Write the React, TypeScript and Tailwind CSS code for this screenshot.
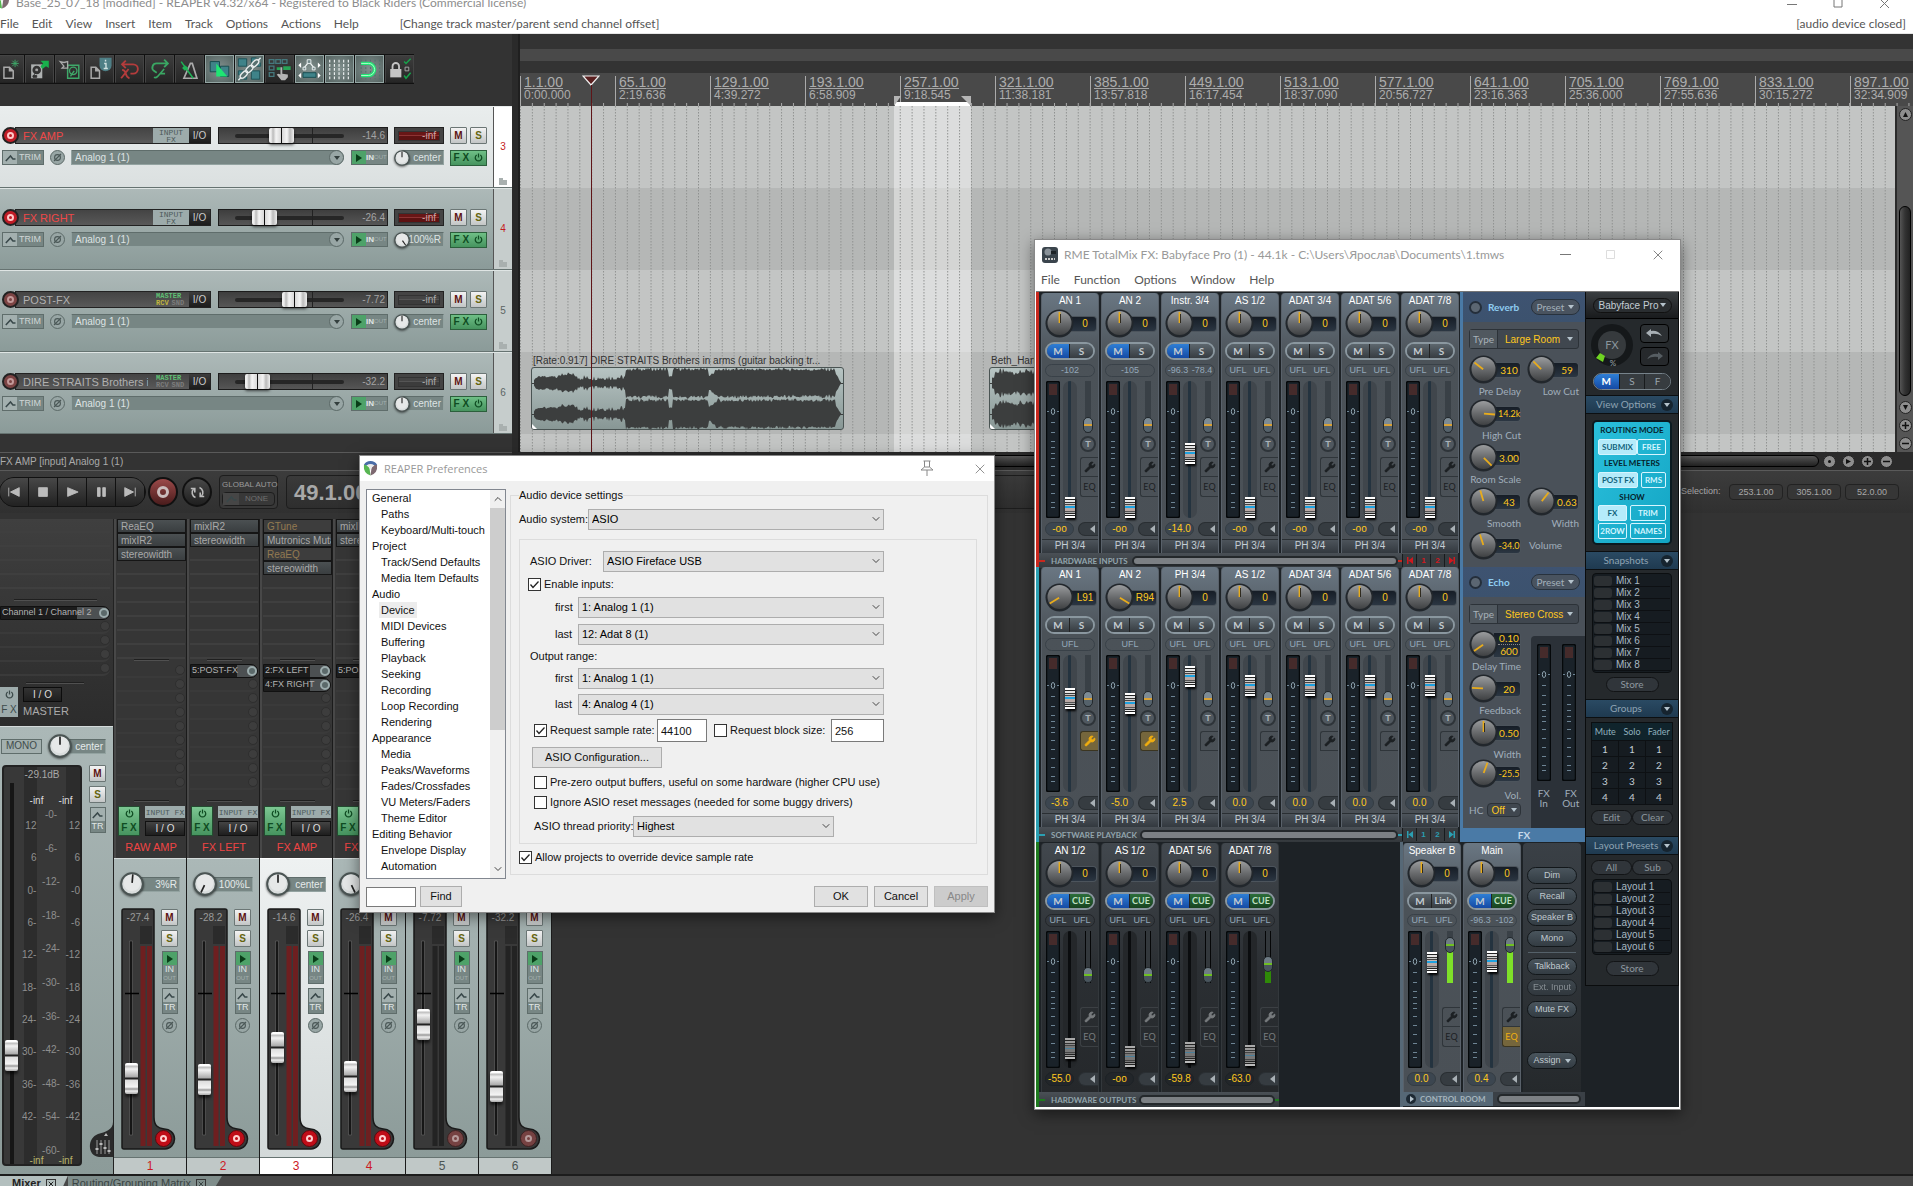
import { type ReactNode } from "react";
import { ChevronDown, ChevronUp, Wrench, X } from "lucide-react";
import clsx from "clsx";

/* ---------- shared bits ---------- */

const V_RANGE =
  "appearance-none bg-transparent m-0 p-0 [writing-mode:vertical-lr] [direction:rtl] cursor-pointer";

const CAP_V =
  "[&::-webkit-slider-thumb]:appearance-none [&::-webkit-slider-thumb]:w-[13px] [&::-webkit-slider-thumb]:h-[31px] [&::-webkit-slider-thumb]:rounded-[2px] [&::-webkit-slider-thumb]:shadow-[0_3px_3px_rgba(0,0,0,.6)] [&::-webkit-slider-thumb]:bg-[linear-gradient(#fff_0_2px,#bbb_3px,#f2f2f2_6px,#aaa_14px,#222_15px,#222_16px,#ddd_17px,#f4f4f4_24px,#999_26px,#eee_28px,#aaa)]";

const CAP_H =
  "[&::-webkit-slider-thumb]:appearance-none [&::-webkit-slider-thumb]:w-[25px] [&::-webkit-slider-thumb]:h-[15px] [&::-webkit-slider-thumb]:rounded-[2px] [&::-webkit-slider-thumb]:shadow-[0_2px_3px_rgba(0,0,0,.6)] [&::-webkit-slider-thumb]:bg-[linear-gradient(90deg,#eee_0_2px,#bbb_4px,#f4f4f4_7px,#d8d8d8_12px,#111_12px,#111_13px,#d8d8d8_13px,#f4f4f4_18px,#bbb_21px,#eee)]";

const CAP_MIX =
  "[&::-webkit-slider-thumb]:appearance-none [&::-webkit-slider-thumb]:w-[10px] [&::-webkit-slider-thumb]:h-[21px] [&::-webkit-slider-thumb]:shadow-[1px_2px_2px_#000] [&::-webkit-slider-thumb]:bg-[linear-gradient(#fff_0_2px,#222_2px_3px,#e4e4e4_3px_5px,#333_5px_6px,#ccc_6px_7px,#444_7px_8px,#c4b6b0_8px_9px,#1ea2e0_9px_11px,#b9a9a5_11px_14px,#555_14px_15px,#aaa_15px_16px,#222_16px_17px,#eee_17px_18px,#222_18px_19px,#fff_19px)]";

const CAP_MIX_DIM =
  "[&::-webkit-slider-thumb]:appearance-none [&::-webkit-slider-thumb]:w-[10px] [&::-webkit-slider-thumb]:h-[21px] [&::-webkit-slider-thumb]:shadow-[1px_2px_2px_#000] [&::-webkit-slider-thumb]:bg-[linear-gradient(#aaa_0_2px,#222_2px_3px,#999_3px_5px,#333_5px_6px,#888_6px_7px,#444_7px_8px,#777_8px_10px,#4a7f9a_10px_11px,#777_11px_14px,#444_14px_15px,#777_15px_16px,#222_16px_17px,#999_17px_18px,#222_18px_19px,#bbb_19px)]";

const TRIM_YELLOW =
  "[&::-webkit-slider-thumb]:appearance-none [&::-webkit-slider-thumb]:w-[10px] [&::-webkit-slider-thumb]:h-[16px] [&::-webkit-slider-thumb]:rounded-full [&::-webkit-slider-thumb]:border [&::-webkit-slider-thumb]:border-[#22282c] [&::-webkit-slider-thumb]:bg-[linear-gradient(#7d8b94_0_6px,#d8a238_6px_8px,#55626b_8px)]";

const TRIM_GREEN =
  "[&::-webkit-slider-thumb]:appearance-none [&::-webkit-slider-thumb]:w-[10px] [&::-webkit-slider-thumb]:h-[16px] [&::-webkit-slider-thumb]:rounded-full [&::-webkit-slider-thumb]:border [&::-webkit-slider-thumb]:border-[#22282c] [&::-webkit-slider-thumb]:bg-[linear-gradient(#6f7c85_0_6px,#6fc022_6px_8px,#49555d_8px)]";

function Power({ size = 9 }: { size?: number }) {
  return (
    <svg width={size} height={size} viewBox="0 0 10 10" fill="none" stroke="currentColor" strokeWidth="1.4">
      <path d="M3 2.2a3.6 3.6 0 1 0 4 0M5 .6v4.4" />
    </svg>
  );
}

function Env() {
  return (
    <svg width="11" height="8" viewBox="0 0 11 8" fill="none" stroke="#39484a" strokeWidth="1.5">
      <path d="M.8 7 5.5 2l2.4 3h2.6" />
    </svg>
  );
}

function Phase() {
  return (
    <button aria-label="Phase invert" className="flex size-[15px] shrink-0 items-center justify-center rounded-full border border-[#5b6967] bg-[#98a6a5]">
      <svg width="9" height="9" viewBox="0 0 9 9" fill="none" stroke="#4b5857" strokeWidth="1.1">
        <circle cx="4.5" cy="4.5" r="2.9" />
        <path d="M1 8 8 1" />
      </svg>
    </button>
  );
}

function WhiteKnob({ angle, size = 16 }: { angle: number; size?: number }) {
  return (
    <svg width={size} height={size} viewBox="0 0 20 20" className="relative z-10 shrink-0 drop-shadow-[0_1px_1px_rgba(0,0,0,.6)]">
      <circle cx="10" cy="10" r="9" fill="#d9dddd" stroke="#4a5453" strokeWidth="1.6" />
      <circle cx="10" cy="9" r="7" fill="#e6e8e8" />
      <path d="M10 9V2" stroke="#222" strokeWidth="1.4" transform={`rotate(${angle} 10 10)`} />
    </svg>
  );
}

function MuteSolo({ kind }: { kind: "M" | "S" }) {
  return (
    <button
      className={clsx(
        "size-[17px] shrink-0 rounded-[1px] border border-[#6b7675] bg-gradient-to-b from-[#f3f3f3] to-[#c3c6c6] text-[10px] leading-[14px] font-bold",
        kind === "M" ? "text-[#5d1212]" : "text-[#64640f]"
      )}
    >
      {kind}
    </button>
  );
}

function ReaperLogo({ size = 15 }: { size?: number }) {
  return (
    <svg width={size} height={size} viewBox="0 0 16 16">
      <path d="M8 0a8 8 0 0 1 7 4l-1 2Q8 1 2 6L1 4a8 8 0 0 1 7-4z" fill="#4a6da8" />
      <path d="M1 4q4 0 6 4l1 7.500Q0 13 1 4z" fill="#57b552" />
      <path d="M15 4q-5 0-6 4l-1 7.500Q16 13 15 4z" fill="#7d6870" />
      <path d="M4 5q4-3 8 0-3 1-4 5-1-4-4-5z" fill="#ececec" />
    </svg>
  );
}

/* ---------- toolbar ---------- */

const TOOLS: { name: string; on?: boolean; art: ReactNode }[] = [
  {
    name: "New project",
    art: (
      <>
        <path d="M8 12h6l4 4v8H8zM14 12v4h4" fill="none" stroke="#aaa" strokeWidth="1.6" />
        <path d="M20 4v8M16 8h8M17 5l6 6M23 5l-6 6" stroke="#3fa869" strokeWidth="1" />
      </>
    ),
  },
  {
    name: "Open project",
    art: (
      <>
        <path d="M5 9h12v15H5z" fill="#aeb1b1" />
        <circle cx="11" cy="15" r="4.6" fill="#333" />
        <circle cx="11" cy="15" r="1.6" fill="#aaa" />
        <path d="M7 22l4-6M7 21h4v2H7z" stroke="#333" fill="#333" />
        <path d="M15 5h9v8l-3-2-4 3-2-3 3-3z" fill="#18b04c" />
      </>
    ),
  },
  {
    name: "Save project",
    art: (
      <>
        <path d="M12 10h12v14H12z" fill="none" stroke="#3fa869" strokeWidth="1.6" />
        <circle cx="18" cy="16" r="4" fill="none" stroke="#3fa869" strokeWidth="1.4" />
        <path d="M15 22l4-6" stroke="#3fa869" strokeWidth="1.6" />
        <path d="M4 6l4 1 4-1v7H6l2-2z" fill="none" stroke="#aaa" strokeWidth="1.4" />
      </>
    ),
  },
  {
    name: "Project settings",
    art: (
      <>
        <path d="M5 12h5l4 4v8H5zM10 12v4h4" fill="none" stroke="#aaa" strokeWidth="1.6" />
        <path d="M14 2h13v8a6.5 6.5 0 0 1-13 0z" fill="#4e7f86" />
        <path d="M20.500 4v2M19 8h2v5M18.500 13.500h4.500" stroke="#cfe0e0" strokeWidth="1.500" fill="none" />
      </>
    ),
  },
  {
    name: "Undo",
    art: (
      <>
        <path d="M6 9h12a5 5 0 0 1 0 10h-3M10 5L6 9l4 4" fill="none" stroke="#b43c3c" strokeWidth="2" />
        <path d="M6 15q3 0 4 4t4 5M13 14l-8 10" fill="none" stroke="#b43c3c" strokeWidth="2" />
      </>
    ),
  },
  {
    name: "Redo",
    art: (
      <>
        <path d="M23 8H11a4.500 4.500 0 0 0-3 8l3 2M19 4l4 4-4 4" fill="none" stroke="#3aa763" strokeWidth="2" />
        <path d="M19 14l-7 8q-2 2-4 1M15 19h5" fill="none" stroke="#3aa763" strokeWidth="1.800" />
      </>
    ),
  },
  {
    name: "Metronome",
    art: (
      <>
        <path d="M15 8h2l5 16H8z" fill="none" stroke="#aaa" strokeWidth="1.800" />
        <path d="M5 6l13 18" stroke="#1fb457" strokeWidth="1.600" />
        <path d="M9 10l4 3-4 3-3-3z" fill="#1fb457" />
      </>
    ),
  },
  {
    name: "Auto crossfade",
    on: true,
    art: (
      <>
        <path d="M4 6h10v11H4zM15 11h9v11h-9z" fill="#3f8389" stroke="#15484c" />
        <path d="M10.500 8v14h12z" fill="#1fe673" />
      </>
    ),
  },
  {
    name: "Item grouping",
    on: true,
    art: (
      <>
        <path d="M2 3h9v8H2zM16 2h10v9H16zM2 16h9v9H2zM16 16h9v9h-9z" fill="#3f8389" stroke="#1c5055" />
        <path d="M2 26L26 2" stroke="#57706f" strokeWidth="7" />
        <g fill="none" stroke="#e8eded" strokeWidth="1.500">
          <ellipse cx="8" cy="20" rx="5" ry="2.500" transform="rotate(-45 8 20)" />
          <ellipse cx="14" cy="14" rx="5" ry="2.500" transform="rotate(-45 14 14)" />
          <ellipse cx="20" cy="8" rx="5" ry="2.500" transform="rotate(-45 20 8)" />
          <path d="M2 26l3-3M23 5l3-3" />
        </g>
      </>
    ),
  },
  {
    name: "Ripple editing",
    art: (
      <>
        <path d="M3 4h5v4H3zM10 4h5v4h-5zM17 4h5v4h-5zM3 11h5v4H3zM3 18h5v4H3z" fill="none" stroke="#45787d" strokeWidth="1.400" />
        <path d="M11 12h4v3h-4zM18 11h8v4h-8z" fill="#27a355" />
        <path d="M15 12h2v7l6 1v3l-3 3h-4l-5-6 2-1 2 1z" fill="#b5b5b5" />
      </>
    ),
  },
  {
    name: "Move envelopes",
    on: true,
    art: (
      <>
        <path d="M8 13l5.500-7 5.500 7" fill="none" stroke="#eef3f3" strokeWidth="1.300" />
        <path d="M11.500 4h4v4h-4zM7 12h3v3H7zM17 12h3v3h-3z" fill="#73888a" stroke="#eef3f3" />
        <path d="M7 18h14v5H7z" fill="#3f8389" stroke="#174c50" />
        <path d="M5 7v6L2 10zM23 7v6l3-3zM5 18v6l-3-3zM23 18v6l3-3z" fill="#fff" />
      </>
    ),
  },
  {
    name: "Grid lines",
    on: true,
    art: <path d="M3.500 4v21M8.500 4v21M13.500 4v21M18.500 4v21M23.500 4v21" stroke="#f0f4f4" strokeWidth="1.200" strokeDasharray="3 1.500" />,
  },
  {
    name: "Snap",
    on: true,
    art: (
      <>
        <path d="M5 4v21M10 4v21M15 4v21M20 4v21M25 4v21" stroke="#49716a" strokeDasharray="2 2" />
        <path d="M5 8h8a6 6 0 0 1 0 13H5" fill="none" stroke="#1fe673" strokeWidth="3.500" />
        <path d="M5 8h8a6 6 0 0 1 0 13H5" fill="none" stroke="#b5ffd0" strokeWidth="1" />
      </>
    ),
  },
  {
    name: "Locking",
    art: (
      <>
        <path d="M4 14h12v9H4z" fill="#c4c4c4" />
        <path d="M6.500 14v-3a3.500 3.500 0 0 1 7 0v3" fill="none" stroke="#c4c4c4" strokeWidth="2" />
        <path d="M20 12h4v4h-4z" fill="none" stroke="#aaa" />
        <path d="M19 6l2 2 5-5M19 21l2 3 5-6" fill="none" stroke="#16a34a" strokeWidth="1.600" />
      </>
    ),
  },
];

function Toolbar() {
  return (
    <div className="flex h-[72px] items-start bg-[#333] pt-5">
      <div className="-ml-[5px] flex gap-px bg-[#111] py-px">
        {TOOLS.map((t) => (
          <button
            key={t.name}
            aria-label={t.name}
            className={clsx(
              "h-[28px] w-[29px] shrink-0 border",
              t.on
                ? "border-[#93a5a3] bg-[radial-gradient(#82918f,#566462)]"
                : "border-[#444] border-b-[#222] bg-gradient-to-b from-[#3d3d3d] to-[#262626]"
            )}
          >
            <svg viewBox="0 0 28 28" className="size-full">
              {t.art}
            </svg>
          </button>
        ))}
      </div>
    </div>
  );
}

/* ---------- track panel ---------- */

const TRACKS = [
  { n: 3, name: "FX AMP", armed: true, sel: true, vol: "-14.6", v: 46, pan: "center", angle: 0, tag: "input" },
  { n: 4, name: "FX RIGHT", armed: true, vol: "-26.4", v: 29, pan: "100%R", angle: 145, tag: "input" },
  { n: 5, name: "POST-FX", vol: "-7.72", v: 60, pan: "center", angle: 0, tag: "rcv" },
  { n: 6, name: "DIRE STRAITS Brothers in arms", vol: "-32.2", v: 22, pan: "center", angle: 0, tag: "master" },
];

function TrackRow({ t }: { t: (typeof TRACKS)[number] }) {
  return (
    <div
      className={clsx(
        "flex h-[82px] border-t border-b border-b-[#667371]",
        t.sel
          ? "border-t-[#e9eded] bg-gradient-to-b from-[#e9eded] to-[#dbe0e0]"
          : "border-t-[#dfe5e4] bg-gradient-to-b from-[#adb9b8] to-[#8b9b99]"
      )}
    >
      <div className="flex w-[493px] flex-col gap-1.5 pt-[20px] pl-0.5">
        <div className="flex h-[17px] items-center">
          <button
            aria-label={`Record arm ${t.name}`}
            className={clsx(
              "z-10 -mr-1 flex size-[17px] shrink-0 items-center justify-center rounded-full border-2 border-[#222]",
              t.armed ? "bg-[#c01c26]" : "bg-[#7c4444]"
            )}
          >
            <span className={clsx("size-[7px] rounded-full border-2", t.armed ? "border-[#ffc8c8]" : "border-[#c39a9a]")} />
          </button>
          <div className="flex h-full w-[196px] border border-[#222] bg-gradient-to-b from-[#444] to-[#595959]">
            <span
              className={clsx(
                "w-[132px] overflow-hidden pl-[7px] text-[11px] leading-[16px] whitespace-nowrap",
                t.armed ? "text-[#ee4848]" : "text-[#b0b0b0]"
              )}
            >
              {t.name}
            </span>
            {t.tag === "input" ? (
              <button className="ml-auto w-[36px] shrink-0 bg-[#9dabab] font-['Liberation_Mono',monospace] text-[8px] leading-[7px] text-[#4c5a5a]">
                INPUT
                <br />
                FX
              </button>
            ) : (
              <span className="ml-auto w-[34px] shrink-0 pl-px font-['Liberation_Mono',monospace] text-[7px] leading-[8px] font-bold text-[#5fbf74]">
                MASTER
                <span className="flex gap-[3px] leading-[7px] text-[#7d7d7d]">
                  <span className={clsx(t.tag === "rcv" && "text-[#c0b63e]")}>RCV</span>
                  <span>SND</span>
                </span>
              </span>
            )}
            <button className="w-[21px] shrink-0 bg-gradient-to-b from-[#3c3c3c] to-[#1c1c1c] text-[10px] leading-[15px] text-[#ccc]">I/O</button>
          </div>
          <div className="relative ml-[7px] flex h-full w-[170px] items-center border border-[#1c1c1c] bg-gradient-to-b from-[#3e3e3e] to-[#565656] pl-[4px]">
            <span className="absolute left-[16px] h-1 w-[109px] rounded bg-[#262626]" />
            <span className="absolute left-[93px] h-full w-px bg-[#222]" />
            <input
              type="range"
              aria-label={`Volume ${t.name}`}
              min={0}
              max={108}
              defaultValue={t.v}
              className={clsx("relative h-4 w-[132px] appearance-none bg-transparent", CAP_H)}
            />
            <span className="ml-auto pr-0.5 text-[10px] text-[#a4a4a4]">{t.vol}</span>
          </div>
          <div className="ml-[6px] flex h-full w-[50px] items-center border border-[#222] bg-[#444] px-[3px]">
            <div
              className={clsx(
                "h-[10px] w-full border border-[#333] pr-[3px] text-right text-[10px] leading-[8px]",
                t.armed ? "bg-[linear-gradient(#681616_3px,#8d3333_3px_4px,#5d1212_4px)] text-[#d0a5a5]" : "bg-[linear-gradient(#444_3px,#555_3px_4px,#3c3c3c_4px)] text-[#aaa]"
              )}
            >
              -inf
            </div>
          </div>
          <div className="ml-[6px] flex gap-[3px]">
            <MuteSolo kind="M" />
            <MuteSolo kind="S" />
          </div>
        </div>
        <div className="flex h-[15px] items-center">
          <button className="flex h-full w-[42px] items-center border border-[#5f6d6b] bg-[#778684] text-[9px] text-[#d0d6d6]">
            <span className="flex h-full w-[14px] items-center justify-center bg-[#a3b0af]">
              <Env />
            </span>
            <span className="pl-[2px]">TRIM</span>
          </button>
          <span className="ml-[6px] flex">
            <Phase />
          </span>
          <div className="relative ml-[6px] h-full w-[273px]">
            <select
              aria-label={`Input ${t.name}`}
              className="block h-full w-full appearance-none rounded-r-full border border-[#93a3a1] border-t-[#5f6d6b] bg-[#778684] pl-[3px] text-[10px] leading-[12px] text-[#dde3e3]"
            >
              <option>Analog 1 (1)</option>
            </select>
            <span className="pointer-events-none absolute top-0 right-0 flex size-[15px] items-center justify-center rounded-full border border-[#5b6967] bg-[#98a6a5]">
              <svg width="6" height="4">
                <path d="M0 0h6L3 4z" fill="#333f3e" />
              </svg>
            </span>
          </div>
          <button className="ml-[7px] flex h-full w-[37px] items-center border border-[#5f6d6b] bg-[#778684] text-[#e0e6e6]">
            <span className="flex h-full w-[14px] shrink-0 items-center justify-center bg-[#4ea269]">
              <svg width="6" height="8">
                <path d="M0 0l6 4-6 4z" fill="#093d18" />
              </svg>
            </span>
            <span className="text-[8px] font-bold">IN</span>
            <span className="text-[6px] text-[#a3b0af]">OUT</span>
          </button>
          <div className="ml-[6px] flex h-full w-[50px] items-center">
            <WhiteKnob angle={t.angle} />
            <span className="-ml-2 h-full flex-1 border border-[#93a3a1] border-t-[#5f6d6b] bg-[#778684] pr-0.5 text-right text-[10px] leading-[13px] text-[#dde3e3]">
              {t.pan}
            </span>
          </div>
          <button className="ml-[6px] flex h-[16px] w-[37px] items-center justify-around border border-[#2c5f3c] bg-gradient-to-b from-[#6fbf86] to-[#46945f] text-[10px] font-bold text-[#0f4c22]">
            F X
            <Power />
          </button>
        </div>
      </div>
      <div
        className={clsx(
          "flex w-[19px] flex-col items-center border-l border-[#555] pt-[32px] text-[10px] leading-4",
          t.sel ? "bg-white" : "bg-[#c6cdcc]",
          t.armed ? "text-[#c41a20]" : "text-[#5c6463]"
        )}
      >
        {t.n}
        <svg width="8" height="7" className="mt-auto mb-[2px]">
          <path d="M0 0h4v2h4v5H0z" fill="#a9b0af" />
        </svg>
      </div>
    </div>
  );
}

/* ---------- arrange view ---------- */

const RULER = [
  ["1.1.00", "0:00.000"],
  ["65.1.00", "2:19.636"],
  ["129.1.00", "4:39.272"],
  ["193.1.00", "6:58.909"],
  ["257.1.00", "9:18.545"],
  ["321.1.00", "11:38.181"],
  ["385.1.00", "13:57.818"],
  ["449.1.00", "16:17.454"],
  ["513.1.00", "18:37.090"],
  ["577.1.00", "20:56.727"],
  ["641.1.00", "23:16.363"],
  ["705.1.00", "25:36.000"],
  ["769.1.00", "27:55.636"],
  ["833.1.00", "30:15.272"],
  ["897.1.00", "32:34.909"],
];

function noise(i: number) {
  const s = Math.sin(i * 12.9898) * 43758.5453;
  return s - Math.floor(s);
}

function wavePath(mid: number, width: number, level: (x: number) => number, seed: number) {
  const top: string[] = [];
  const bottom: string[] = [];
  for (let x = 2; x <= width - 4; x++) {
    const a = level(x);
    top.push(`${x} ${mid - a * (0.8 + 0.2 * noise(x + seed))}`);
    bottom.unshift(`${x} ${mid + a * (0.8 + 0.2 * noise(x + seed + 500))}`);
  }
  return `M${top.join("L")}L${bottom.join("L")}Z`;
}

function direLevel(x: number) {
  if (x < 5) return x * 1.5;
  if (x < 28) return 6 + 2 * noise(x >> 1);
  if (x < 44) return 7 + 4 * noise(x);
  if (x < 94) return 3 + 6 * noise(x);
  if (x > 136 && x < 141) return 7;
  if (x > 176 && x < 184) return 6 + (x - 176);
  if (x > 303) return Math.max(0.5, 12 - (x - 303) * 2);
  return x < 180 ? 14.5 + 1.5 * noise(x) : 14 + 2 * noise(x);
}

function MediaItem({ width, level }: { width: number; level: (x: number) => number }) {
  return (
    <svg width={width} height="63" className="rounded-[3px] border border-[#4a5453] bg-gradient-to-b from-[#b7c4c3] to-[#889795]">
      <path d={wavePath(15, width, level, 3)} fill="#3c3e3e" />
      <path d={wavePath(46, width, level, 77)} fill="#3c3e3e" />
      <path d={`M0 15.500H${width}M0 46.500H${width}`} stroke="#3c3e3e" />
      <path d="M0 56v6h6z" fill="#fff" />
    </svg>
  );
}

function Arrange() {
  return (
    <div className="relative flex min-w-0 flex-1 flex-col overflow-hidden bg-[#333] pt-[15px]">
      <div className="h-3 shrink-0 bg-[#494949]" />
      <div className="h-3 shrink-0" />
      <div className="relative h-[33px] shrink-0 overflow-hidden bg-[#494949]">
        <svg className="absolute inset-x-0 bottom-0 h-[3px] w-full">
          <defs>
            <pattern id="ticks" width="11.867" height="3" patternUnits="userSpaceOnUse">
              <path d="M.5 0v3" stroke="#aaa" />
            </pattern>
          </defs>
          <rect width="100%" height="3" fill="url(#ticks)" />
        </svg>
        <div className="relative flex">
          {RULER.map(([bar, time]) => (
            <div key={bar} className="mt-[3px] flex h-[30px] w-[95px] shrink-0 flex-col items-start border-l border-[#aaa] pl-[3px] text-[#adadad]">
              <span className="border-b border-[#a6a6a6] text-[14px] leading-[12px]">{bar}</span>
              <span className="text-[12px] leading-[13px]">{time}</span>
            </div>
          ))}
        </div>
        {/* loop selection handles */}
        <svg width="77" height="10" className="absolute bottom-0 left-[374px]">
          <path d="M1 6h75v4H1z" fill="#fff" />
          <path d="M0 0h7L0 10zM77 0H67l10 10z" fill="#b5b5b5" />
        </svg>
      </div>
      <div className="flex h-[346px] shrink-0">
        <div className="relative min-w-0 flex-1 overflow-hidden bg-[repeating-linear-gradient(#c3c5c4_0_82px,#b5b7b6_82px_164px)]">
          <svg className="absolute inset-0 size-full">
            <defs>
              <pattern id="grid" width="11.867" height="3" patternUnits="userSpaceOnUse">
                <path d="M.5 0v1.500" stroke="#8f9190" />
              </pattern>
            </defs>
            <rect x="374" width="77" height="100%" fill="#fff" opacity=".42" />
            <rect width="100%" height="100%" fill="url(#grid)" />
          </svg>
          <div className="absolute top-[248px] left-[11px]">
            <div className="w-[310px] pl-0.5 text-[10px] leading-[13px] whitespace-nowrap text-[#333]">
              [Rate:0.917] DIRE STRAITS Brothers in arms (guitar backing tr...
            </div>
            <MediaItem width={313} level={direLevel} />
          </div>
          <div className="absolute top-[248px] left-[469px]">
            <div className="pl-0.5 text-[10px] leading-[13px] text-[#333]">Beth_Hart</div>
            <MediaItem width={240} level={(x) => (x < 5 ? 6 : 9 + 6 * noise(x))} />
          </div>
        </div>
        <VScroll />
      </div>
      {/* edit cursor */}
      <svg width="18" height="378" className="absolute top-[41px] left-[62px]">
        <path d="M1 1h16L9 10z" fill="#5a2020" stroke="#f0f0f0" strokeWidth="1.200" />
        <path d="M9.500 10v368" stroke="#5e1518" />
      </svg>
    </div>
  );
}

function RoundButton({ label, children }: { label: string; children: ReactNode }) {
  return (
    <button aria-label={label} className="flex size-[13px] items-center justify-center rounded-full border border-[#222] bg-[#8e8e8e]">
      <svg width="7" height="7" viewBox="0 0 7 7" stroke="#111" strokeWidth="1.500">
        {children}
      </svg>
    </button>
  );
}

function VScroll() {
  return (
    <div className="flex w-[18px] shrink-0 flex-col items-center border-l-2 border-[#2b2b2b] bg-[#555] pt-[2px]">
      <RoundButton label="Scroll up">
        <path d="M3.500 1 6 6H1z" fill="#111" stroke="none" />
      </RoundButton>
      <div className="mt-[85px] h-[190px] w-[12px] rounded-md border border-black bg-gradient-to-r from-[#555] via-[#333] to-[#222]" />
      <div className="mt-auto flex flex-col items-center gap-[5px] pb-0.5">
        <RoundButton label="Scroll down">
          <path d="M3.500 6 6 1H1z" fill="#111" stroke="none" />
        </RoundButton>
        <RoundButton label="Zoom in vertically">
          <path d="M0 3.500h7M3.500 0v7" />
        </RoundButton>
        <RoundButton label="Zoom out vertically">
          <path d="M0 3.500h7" />
        </RoundButton>
      </div>
    </div>
  );
}

function HScroll() {
  return (
    <div className="flex flex-1 items-center bg-[#2b2b2b] pr-[20px]">
      <div className="mx-1 h-[12px] flex-1 rounded-full border border-black bg-gradient-to-b from-[#555] to-[#222]" />
      <div className="flex gap-[6px]">
        <RoundButton label="Grip">
          <circle cx="3.500" cy="3.500" r="1.500" fill="#111" stroke="none" />
        </RoundButton>
        <RoundButton label="Scroll right">
          <path d="M1 1l5 2.500L1 6z" fill="#111" stroke="none" />
        </RoundButton>
        <RoundButton label="Zoom in">
          <path d="M0 3.500h7M3.500 0v7" />
        </RoundButton>
        <RoundButton label="Zoom out">
          <path d="M0 3.500h7" />
        </RoundButton>
      </div>
    </div>
  );
}

/* ---------- transport ---------- */

const TRANSPORT = [
  { name: "Go to start", d: "M2 3v10M14 3 4 8l10 5z" },
  { name: "Stop", d: "M3 3h10v10H3z" },
  { name: "Play", d: "M3 3l12 5-12 5z" },
  { name: "Pause", d: "M4 3h3v10H4zM10 3h3v10h-3z" },
  { name: "Go to end", d: "M14 3v10M2 3l10 5-10 5z" },
];

function Transport() {
  return (
    <div className="flex h-[43px] shrink-0 items-center border-t border-[#5a5a5a] bg-gradient-to-b from-[#3c3c3c] to-[#303030]">
      <div className="-ml-px flex overflow-hidden rounded-full border border-[#111] bg-[#111]">
        {TRANSPORT.map((b) => (
          <button key={b.name} aria-label={b.name} className="mr-px flex h-[28px] w-[28px] items-center justify-center bg-gradient-to-b from-[#484848] to-[#222]">
            <svg width="14" height="14" viewBox="0 0 16 16" fill="#bbb" stroke="#bbb" strokeWidth="1">
              <path d={b.d} />
            </svg>
          </button>
        ))}
      </div>
      <button aria-label="Record" className="ml-[2px] flex size-[30px] items-center justify-center rounded-full border-2 border-[#111] bg-gradient-to-b from-[#9c4a4a] to-[#4a1c1c]">
        <span className="size-[12px] rounded-full border-[3px] border-[#cbbcbc]" />
      </button>
      <button aria-label="Repeat" className="ml-1 flex size-[30px] items-center justify-center rounded-full border-2 border-[#111] bg-gradient-to-b from-[#484848] to-[#1f1f1f]">
        <svg width="15" height="15" viewBox="0 0 15 15" fill="none" stroke="#bbb" strokeWidth="1.600">
          <path d="M5.500 12.500a5.300 5.300 0 0 1-2-8.500M9.500 2.500a5.300 5.300 0 0 1 2 8.500" />
          <path d="M.8 3.500h4v4M14.200 11.500h-4v-4" />
        </svg>
      </button>
      <div className="ml-[7px] flex h-[34px] w-[59px] shrink-0 flex-col justify-between rounded border border-[#1d1d1d] bg-[#383838] p-0.5 text-[#9a9a9a]">
        <span className="pt-0.5 text-center text-[8px] leading-[10px] whitespace-nowrap">GLOBAL AUTO</span>
        <button className="flex h-[14px] items-center rounded-sm border border-[#1d1d1d] text-[#707070]">
          <span className="flex h-full w-4 items-center justify-center bg-[#464646]">
            <Env />
          </span>
          <span className="flex-1 text-[8px]">NONE</span>
        </button>
      </div>
      <div className="ml-[8px] flex h-[34px] flex-1 items-center rounded border border-[#1d1d1d] bg-gradient-to-b from-[#3a3a3a] to-[#2e2e2e] pl-[7px] text-[22px] font-bold text-[#a8a8a8]">
        49.1.00
      </div>
      <div className="ml-3 flex w-[232px] items-center gap-1 text-[9px] text-[#a8a8a8]">
        <span className="w-[44px]">Selection:</span>
        {["253.1.00", "305.1.00", "52.0.00"].map((v) => (
          <span key={v} className="h-[16px] w-[54px] rounded-sm border border-[#222] bg-[#363636] text-center leading-[14px]">
            {v}
          </span>
        ))}
      </div>
    </div>
  );
}

/* ---------- mixer ---------- */

function FxSlot({ name, off }: { name?: string; off?: boolean }) {
  return name ? (
    <button
      className={clsx(
        "block h-[14px] w-[69px] overflow-hidden border border-[#151515] pl-[3px] text-left text-[10px] leading-[11px] whitespace-nowrap",
        off ? "bg-[#3d3d3d] text-[#937a51]" : "bg-gradient-to-b from-[#4b5052] to-[#3a3e40] text-[#a9a9a9]"
      )}
    >
      {name}
    </button>
  ) : (
    <div className="h-[14px] w-full border-b-2 border-[#3f3f3f]" />
  );
}

function SendSlot({ name }: { name?: string }) {
  return (
    <div
      className={clsx(
        "flex h-[14px] items-center justify-between rounded-r-full pl-px text-[9px] whitespace-nowrap",
        name ? "border border-[#111] bg-[linear-gradient(90deg,#1c1c1c_70%,#4c5052_70%)] text-[#b3b3b3]" : "border-b-2 border-[#3a3a3a]"
      )}
    >
      <span>{name}</span>
      <span
        className={clsx(
          "size-[10px] shrink-0 rounded-full",
          name ? "border-2 border-[#9babac] bg-[#5b696a]" : "border border-[#2f2f2f] bg-[#3d3d3d]"
        )}
      />
    </div>
  );
}

const Rule = ({ className }: { className: string }) => (
  <div className={clsx("mx-auto h-[2px] border-t border-[#1f1f1f] bg-[#505050]", className)} />
);

const STRIPS = [
  { n: 1, name: "RAW AMP", fx: ["ReaEQ", "mixIR2", "stereowidth"], sends: [], pan: "3%R", angle: 5, vol: "-27.4", v: 56, armed: true },
  { n: 2, name: "FX LEFT", fx: ["mixIR2", "stereowidth"], sends: ["5:POST-FX"], pan: "100%L", angle: 205, vol: "-28.2", v: 55, armed: true },
  { n: 3, name: "FX AMP", fx: ["*GTune", "Mutronics Mutator", "*ReaEQ", "stereowidth"], sends: ["2:FX LEFT", "4:FX RIGHT"], pan: "center", angle: 0, vol: "-14.6", v: 87, armed: true, sel: true },
  { n: 4, name: "FX RIGHT", fx: ["mixIR2", "stereowidth"], sends: ["5:POST-FX"], pan: "100%R", angle: 155, vol: "-26.4", v: 58, armed: true },
  { n: 5, name: "POST-FX", fx: [], sends: [], pan: "center", angle: 0, vol: "-7.72", v: 110 },
  { n: 6, name: "DIRE STRAITS", fx: [], sends: [], pan: "center", angle: 0, vol: "-32.2", v: 48 },
];

function Strip({ s }: { s: (typeof STRIPS)[number] }) {
  const slots = Array.from({ length: 10 }, (_, i) => s.fx[i]);
  const sends: (string | undefined)[] = Array.from({ length: 9 }, (_, i) => s.sends[i]);
  return (
    <div className="flex w-[73px] shrink-0 flex-col border-r border-[#1b1b1b]">
      <div className="h-[339px] border-l-2 border-[#484848] bg-[#363636] px-px">
        {slots.map((f, i) => (
          <FxSlot key={i} name={f?.replace("*", "")} off={f?.startsWith("*")} />
        ))}
        <Rule className="w-[35px]" />
        <div className="mt-[3px]">
          {sends.map((f, i) => (
            <SendSlot key={i} name={f} />
          ))}
        </div>
        <Rule className="mt-[10px] w-[35px]" />
        <div className="mt-[4px] flex gap-[5px] pl-px">
          <button className="flex h-[30px] w-[22px] flex-col items-center justify-around border border-[#234c30] bg-gradient-to-b from-[#7cc792] to-[#46945f] text-[10px] leading-[11px] font-bold text-[#0f4c22]">
            <Power />
            F X
          </button>
          <div className="flex w-[40px] flex-col justify-between">
            <button className="h-[12px] bg-[#9dabab] font-['Liberation_Mono',monospace] text-[8px] leading-[11px] whitespace-nowrap text-[#4c5a5a]">INPUT FX</button>
            <button className="h-[15px] border border-[#111] bg-gradient-to-b from-[#444] to-[#1e1e1e] text-[10px] leading-[12px] text-[#ddd]">I / O</button>
          </div>
        </div>
        <div className="mt-[2px] truncate text-center text-[11px] leading-[18px] text-[#ef4444]">{s.name}</div>
      </div>
      <div
        className={clsx(
          "relative h-[299px] border-t",
          s.sel ? "border-white bg-gradient-to-b from-[#eef1f1] to-[#d3d9d9]" : "border-[#d3dada] bg-gradient-to-b from-[#abb8b7] to-[#8c9b99]"
        )}
      >
        {/* fader well with the bay for the arm button */}
        <svg width="72" height="298" className="absolute inset-0">
          <path
            d="M8 52q0-2 2-2h28q2 0 2 2v206c0 9 4 11 10 12a10 10 0 0 1 1 20H10q-2 0-2-2z"
            fill="#393939"
            stroke="#191919"
            strokeWidth="1.500"
          />
          <path d="M15.500 82h3v194h-3z" fill="#161616" stroke="#666" strokeWidth=".6" />
          <path d="M11 134.500h14" stroke="#000" strokeWidth="1.500" />
          <path d="M26 67h12v18H26z" fill="#2b2b2b" />
          <path d="M26.500 87h5v200h-5zM33 87h5v200h-5z" fill={s.armed ? "#6e1f20" : "#232323"} />
        </svg>
        <div className="relative flex h-[50px] items-center pl-[6px]">
          <WhiteKnob angle={s.angle} size={24} />
          <span className="-ml-2 h-[15px] w-[44px] border border-[#93a3a1] border-t-[#5f6d6b] bg-[#778684] pr-0.5 text-right text-[10px] leading-[13px] text-[#e5eaea]">
            {s.pan}
          </span>
        </div>
        <div className="relative flex">
          <div className="w-[40px] pl-[8px]">
            <div className="h-[16px] text-center text-[10px] leading-[18px] text-[#9a9a9a]">{s.vol}</div>
            <input
              type="range"
              aria-label={`Volume ${s.name}`}
              min={0}
              max={194}
              defaultValue={s.v}
              className={clsx("block h-[225px] w-[18px]", V_RANGE, CAP_V)}
            />
          </div>
          <div className="ml-[7px] flex w-[17px] flex-col items-center">
            <MuteSolo kind="M" />
            <div className="h-1" />
            <MuteSolo kind="S" />
            <button className="mt-1 flex h-[33px] w-[16px] flex-col items-center border border-[#5f6d6b] bg-[#778684] text-[9px] leading-[9px] text-[#e0e6e6]">
              <span className="flex h-[13px] w-full items-center justify-center bg-[#4ea269]">
                <svg width="6" height="8">
                  <path d="M0 0l6 4-6 4z" fill="#093d18" />
                </svg>
              </span>
              IN
              <span className="text-[6px] text-[#a3b0af]">OUT</span>
            </button>
            <button className="mt-1 mb-1 flex h-[26px] w-[16px] flex-col items-center border border-[#5f6d6b] bg-[#778684] text-[9px] leading-[11px] text-[#e0e6e6]">
              <span className="flex h-[13px] w-full items-center justify-center bg-[#a3b0af]">
                <Env />
              </span>
              TR
            </button>
            <Phase />
          </div>
        </div>
        <button
          aria-label={`Record arm ${s.name}`}
          className={clsx(
            "absolute right-[14px] bottom-[10px] flex size-[17px] items-center justify-center rounded-full border",
            s.armed ? "border-[#5a0a0e] bg-[#c00d18]" : "border-[#3c2222] bg-[#764242]"
          )}
        >
          <span className={clsx("size-[7px] rounded-full border-2", s.armed ? "border-[#ffd0d0]" : "border-[#b59a9a]")} />
        </button>
      </div>
      <div
        className={clsx(
          "h-[17px] border-t border-[#667371] text-center text-[12px] leading-[16px]",
          s.sel ? "bg-white" : "bg-[#c0c8c7]",
          s.armed ? "text-[#cc1a24]" : "text-[#4b5453]"
        )}
      >
        {s.n}
      </div>
    </div>
  );
}

const SIDE_SCALE = ["12", "6", "0-", "6-", "12-", "18-", "24-", "30-", "36-", "42-"];
const MID_SCALE = ["-0-", "-6-", "-12-", "-18-", "-24-", "-30-", "-36-", "-42-", "-48-", "-54-", "-60-"];

function Master() {
  return (
    <div className="flex w-[114px] shrink-0 flex-col border-r border-[#222]">
      <div className="h-[207px] bg-gradient-to-b from-[#3f3f3f] to-[#2c2c2c] pr-[3px]">
        {[0, 1, 2, 3, 4].map((i) => (
          <FxSlot key={i} />
        ))}
        <Rule className="mt-[10px] w-[83px]" />
        <div className="mt-[5px]">
          <SendSlot name="Channel 1 / Channel 2" />
          {[0, 1, 2, 3].map((i) => (
            <SendSlot key={i} />
          ))}
        </div>
        <Rule className="mt-[6px] w-[58px]" />
        <div className="mt-[3px] flex gap-[5px]">
          <button className="flex h-[30px] w-[18px] flex-col items-center justify-around bg-[#9dabab] text-[10px] leading-[11px] text-[#3c4a4a]">
            <Power />
            <span className="whitespace-nowrap">F X</span>
          </button>
          <div>
            <button className="block h-[15px] w-[39px] border border-[#0c0c0c] bg-gradient-to-b from-[#333] to-[#1e1e1e] text-[10px] leading-[12px] text-[#ddd]">I / O</button>
            <span className="block text-[11px] leading-[18px] text-[#aaa]">MASTER</span>
          </div>
        </div>
      </div>
      <div className="relative flex flex-1 flex-col border-t border-[#d3dada] bg-gradient-to-b from-[#abb8b7] to-[#8c9b99]">
        <div className="flex h-[38px] items-center pl-px">
          <button className="h-[15px] w-[41px] border border-[#5f6d6b] bg-[#a3b0af] text-[10px] leading-[12px] text-[#3f4c4b]">MONO</button>
          <span className="ml-[6px] flex">
            <WhiteKnob angle={0} size={24} />
          </span>
          <span className="-ml-2 h-[15px] w-[42px] border border-[#93a3a1] border-t-[#5f6d6b] bg-[#778684] pr-0.5 text-right text-[10px] leading-[13px] text-[#e5eaea]">
            center
          </span>
        </div>
        <div className="flex">
          <div className="ml-[2px] h-[401px] w-[80px] rounded-sm border-2 border-[#222] bg-[linear-gradient(90deg,#383838_20px,#2c2c2c_20px_33px,#383838_33px_62px,#2c2c2c_62px)]">
            <div className="text-center text-[10px] leading-[16px] text-[#a8a8a8]">-29.1dB</div>
            <div className="flex text-[10px] leading-[12px] text-[#8f8f8f]">
              <input
                type="range"
                aria-label="Master volume"
                min={0}
                max={359}
                defaultValue={95}
                className={clsx(
                  "-ml-[2px] h-[381px] w-[18px] shrink-0",
                  "[&::-webkit-slider-runnable-track]:bg-[linear-gradient(90deg,transparent_5px,#161616_5px_9px,transparent_9px)]",
                  V_RANGE,
                  CAP_V
                )}
              />
              <div className="ml-[2px] flex flex-1 flex-col">
                <div className="mt-[12px] flex justify-around text-[#ddd]">
                  <span>-inf</span>
                  <span>-inf</span>
                </div>
                <div className="flex h-[350px] justify-between">
                  <div className="flex h-[316px] flex-col justify-between pt-[13px] text-right">
                    {SIDE_SCALE.map((v) => (
                      <span key={v}>{v}</span>
                    ))}
                  </div>
                  <div className="flex flex-col justify-between pt-[2px] text-center">
                    {MID_SCALE.map((v) => (
                      <span key={v}>{v}</span>
                    ))}
                  </div>
                  <div className="flex h-[316px] flex-col justify-between pt-[13px] text-right">
                    {SIDE_SCALE.map((v) => (
                      <span key={v}>{v.endsWith("-") ? `-${v.slice(0, -1)}` : v}</span>
                    ))}
                  </div>
                </div>
                <div className="-mt-px flex justify-around leading-[10px] text-[#b6b26a]">
                  <span>-inf</span>
                  <span>-inf</span>
                </div>
              </div>
            </div>
          </div>
          <div className="ml-[7px] flex w-[17px] flex-col items-center gap-1">
            <MuteSolo kind="M" />
            <MuteSolo kind="S" />
            <button className="flex h-[26px] w-[16px] flex-col items-center border border-[#5f6d6b] bg-[#778684] text-[9px] leading-[11px] text-[#e0e6e6]">
              <span className="flex h-[13px] w-full items-center justify-center bg-[#a3b0af]">
                <Env />
              </span>
              TR
            </button>
          </div>
        </div>
        <svg width="24" height="38" className="absolute right-0 bottom-[16px]">
          <path d="M24 2c0 8-8 10-15 12C-2 18-2 36 10 37h14z" fill="#2a2a2a" />
          <path d="M8 20v14M12 20v14M16 20v14M20 20v14" stroke="#999" strokeWidth="1" />
          <path d="M6.500 28h3v2h-3zM10.500 23h3v2h-3zM14.500 27h3v2h-3zM18.500 30h3v2h-3zM15 16l2-3 2 3z" fill="#bbb" />
        </svg>
      </div>
    </div>
  );
}

/* ---------- REAPER preferences ---------- */

const PREFS: [string, string[]][] = [
  ["General", ["Paths", "Keyboard/Multi-touch"]],
  ["Project", ["Track/Send Defaults", "Media Item Defaults"]],
  ["Audio", ["Device", "MIDI Devices", "Buffering", "Playback", "Seeking", "Recording", "Loop Recording", "Rendering"]],
  ["Appearance", ["Media", "Peaks/Waveforms", "Fades/Crossfades", "VU Meters/Faders", "Theme Editor"]],
  ["Editing Behavior", ["Envelope Display", "Automation"]],
];

function Select({ id, value, className }: { id: string; value: string; className: string }) {
  return (
    <span className={clsx("relative block h-[21px] shrink-0", className)}>
      <select id={id} className="block h-full w-full appearance-none border border-[#adadad] bg-[#e1e1e1] pl-[3px] text-[11px] text-black">
        <option>{value}</option>
      </select>
      <ChevronDown className="pointer-events-none absolute top-[4px] right-[2px] size-3 text-[#444]" strokeWidth={2} />
    </span>
  );
}

function Field({ id, label, value, labelWidth, width }: { id: string; label: string; value: string; labelWidth: string; width: string }) {
  return (
    <div className="flex h-[21px] items-center">
      <label htmlFor={id} className={clsx("shrink-0 whitespace-nowrap", labelWidth)}>
        {label}
      </label>
      <Select id={id} value={value} className={width} />
    </div>
  );
}

function Check({ label, checked }: { label: string; checked?: boolean }) {
  return (
    <label className="flex h-[13px] items-center gap-[3px] whitespace-nowrap">
      <span className="relative flex size-[13px]">
        <input type="checkbox" defaultChecked={checked} className="peer size-[13px] appearance-none border border-[#333] bg-white" />
        <svg viewBox="0 0 13 13" className="pointer-events-none absolute inset-0 hidden peer-checked:block" fill="none" stroke="#222" strokeWidth="1.300">
          <path d="M2.500 6.500 5 9.500l5.500-6" />
        </svg>
      </span>
      {label}
    </label>
  );
}

const PUSH = "h-[21px] border border-[#adadad] bg-[#e1e1e1] text-center";

function Preferences() {
  return (
    <section
      aria-label="REAPER Preferences"
      className="absolute top-[455px] left-[359px] z-20 w-[636px] border border-[#888] bg-[#f0f0f0] pb-[5px] text-[11px] leading-[13px] text-[#111] shadow-[0_4px_14px_rgba(0,0,0,.5)]"
    >
      <header className="flex h-[25px] items-center bg-white pl-[3px] font-['Open_Sans','Noto_Sans',sans-serif] text-[#999]">
        <ReaperLogo />
        <h2 className="ml-[6px] flex-1 text-[11px]">REAPER Preferences</h2>
        <svg width="14" height="17" viewBox="0 0 14 17" fill="none" stroke="#888" className="mr-[38px]">
          <path d="M3.500 1h7M4.500 1v6h5V1M4.500 7 1 10h12L9.500 7M7 10v6" />
        </svg>
        <button aria-label="Close" className="mr-[6px]">
          <X className="size-4 text-[#777]" strokeWidth={1.2} />
        </button>
      </header>
      <div className="flex gap-[4px] px-[6px] pt-[8px]">
        <div className="flex h-[390px] w-[140px] shrink-0 border border-[#828790] bg-white">
          <ul className="flex-1 leading-[16px] whitespace-nowrap">
            {PREFS.map(([group, items]) => (
              <li key={group}>
                <a href="#" className="ml-[5px]">
                  {group}
                </a>
                <ul>
                  {items.map((item) => (
                    <li key={item}>
                      <a href="#" className={clsx("ml-[12px] inline-block px-[2px]", item === "Device" && "bg-[#ececec]")}>
                        {item}
                      </a>
                    </li>
                  ))}
                </ul>
              </li>
            ))}
          </ul>
          <div className="flex w-[15px] flex-col items-center bg-[#f0f0f0] py-[3px]">
            <ChevronUp className="size-3 text-[#444]" />
            <div className="mt-[3px] h-[222px] w-full bg-[#cdcdcd]" />
            <ChevronDown className="mt-auto size-3 text-[#444]" />
          </div>
        </div>
        <fieldset className="h-[386px] flex-1 border border-[#dcdcdc] pl-[8px]">
          <legend className="px-0">Audio device settings</legend>
          <div className="pt-[7px]">
            <Field id="audio-system" label="Audio system:" value="ASIO" labelWidth="w-[69px]" width="w-[296px]" />
          </div>
          <div className="mt-[9px] mr-[10px] flex flex-col border border-[#dcdcdc] pt-[11px] pb-[6px]">
            <div className="pl-[10px]">
              <Field id="driver" label="ASIO Driver:" value="ASIO Fireface USB" labelWidth="w-[73px]" width="w-[281px]" />
            </div>
            <div className="mt-[6px] mb-[6px] pl-[8px]">
              <Check label="Enable inputs:" checked />
            </div>
            <div className="flex flex-col gap-[6px] pl-[35px]">
              <Field id="in-first" label="first" value="1: Analog 1 (1)" labelWidth="w-[23px]" width="w-[306px]" />
              <Field id="in-last" label="last" value="12: Adat 8 (1)" labelWidth="w-[23px]" width="w-[306px]" />
            </div>
            <div className="mt-[5px] mb-[5px] pl-[10px]">Output range:</div>
            <div className="flex flex-col gap-[5px] pl-[35px]">
              <Field id="out-first" label="first" value="1: Analog 1 (1)" labelWidth="w-[23px]" width="w-[306px]" />
              <Field id="out-last" label="last" value="4: Analog 4 (1)" labelWidth="w-[23px]" width="w-[306px]" />
            </div>
            <div className="mt-[4px] flex h-[23px] items-center pl-[14px]">
              <div className="w-[123px]">
                <Check label="Request sample rate:" checked />
              </div>
              <input aria-label="Sample rate" defaultValue="44100" className="h-full w-[50px] border border-[#7a7a7a] bg-white px-[3px]" />
              <div className="ml-[7px] w-[117px]">
                <Check label="Request block size:" />
              </div>
              <input aria-label="Block size" defaultValue="256" className="h-full w-[53px] border border-[#7a7a7a] bg-white px-[3px]" />
            </div>
            <button className={clsx("mt-[5px] ml-[12px] w-[130px]", PUSH)}>ASIO Configuration...</button>
            <div className="mt-[8px] flex flex-col gap-[7px] pl-[14px]">
              <Check label="Pre-zero output buffers, useful on some hardware (higher CPU use)" />
              <Check label="Ignore ASIO reset messages (needed for some buggy drivers)" />
              <Field id="priority" label="ASIO thread priority:" value="Highest" labelWidth="w-[99px]" width="w-[201px]" />
            </div>
          </div>
          <div className="mt-[7px]">
            <Check label="Allow projects to override device sample rate" checked />
          </div>
        </fieldset>
      </div>
      <div className="mt-[7px] flex items-center px-[6px]">
        <input aria-label="Find preference" className="h-[20px] w-[50px] border border-[#7a7a7a] bg-white" />
        <button className={clsx("ml-[4px] w-[42px]", PUSH)}>Find</button>
        <div className="ml-auto flex gap-[6px]">
          <button className={clsx("w-[54px]", PUSH)}>OK</button>
          <button className={clsx("w-[54px]", PUSH)}>Cancel</button>
          <button disabled className="h-[21px] w-[54px] border border-[#bfbfbf] bg-[#ccc] text-[#888]">
            Apply
          </button>
        </div>
      </div>
    </section>
  );
}

/* ---------- TotalMix ---------- */

const MIX_TICKS = [129, 139, 148, 154, 160, 165, 173, 182, 191, 200, 209, 214];

const NARROW = "font-['Liberation_Sans_Narrow','Lato',sans-serif] font-bold whitespace-nowrap";

function DarkKnob({ angle }: { angle: number }) {
  return (
    <svg width="29" height="29" viewBox="0 0 29 29" className="relative z-10 shrink-0">
      <defs>
        <linearGradient id="knob" x1="0" y1="0" x2="0" y2="1">
          <stop offset="0" stopColor="#9a9c9e" />
          <stop offset=".5" stopColor="#6a6c6e" />
          <stop offset="1" stopColor="#3f4143" />
        </linearGradient>
      </defs>
      <circle cx="14.500" cy="14.500" r="14" fill="#22272c" />
      <circle cx="14.500" cy="14" r="12" fill="url(#knob)" />
      <path d="M14.500 14V3" stroke="#e8ac1c" strokeWidth="1.800" transform={`rotate(${angle} 14.5 14.5)`} />
      {angle === 0 && <path d="M15.500 5v9" stroke="#111" strokeWidth=".8" />}
    </svg>
  );
}

function KnobValue({ angle, value }: { angle: number; value: ReactNode }) {
  const long = typeof value === "string" && value.length > 4;
  return (
    <div className="flex h-[29px] items-center">
      <DarkKnob angle={angle} />
      <span
        className={clsx(
          "-ml-1 w-[27px] rounded-r-[4px] border border-l-0 border-[#4c545c] bg-gradient-to-b from-[#161d26] to-[#2b3642] pl-[4px] text-center leading-[14px] text-[#ffc81e]",
          long ? "text-[9px]" : "text-[10px]"
        )}
      >
        {value}
      </span>
    </div>
  );
}

function Meter() {
  return (
    <svg width="14" height="137" className="shrink-0">
      <rect x=".5" y=".5" width="13" height="136" rx="2" fill="#1a2229" stroke="#05080a" strokeWidth="1.500" />
      <rect x="3" y="3" width="8" height="11" fill="#452b2b" />
      <path d={MIX_TICKS.map((y) => `M5 ${y - 87.5}h4`).join("")} stroke="#6d8494" />
      <path d="M1 30.500h2M11 30.500h2" stroke="#6d8494" />
      <ellipse cx="7" cy="30.500" rx="1.700" ry="3" fill="none" stroke="#8fa4b0" />
    </svg>
  );
}

type Chan = { name: string; pan?: string; angle?: number; mute?: boolean; s?: string; lvl: string[]; val: string; v: number; trim?: number; wrench?: boolean; eq?: "on" | "off" };

const UFL = ["UFL", "UFL"];

const INPUTS: Chan[] = [
  { name: "AN 1", mute: true, lvl: ["-102"], val: "-oo", v: 0, eq: "off" },
  { name: "AN 2", mute: true, lvl: ["-105"], val: "-oo", v: 0, eq: "off" },
  { name: "Instr. 3/4", mute: true, lvl: ["-96.3", "-78.4"], val: "-14.0", v: 54, eq: "off" },
  { name: "AS 1/2", lvl: UFL, val: "-oo", v: 0, eq: "off" },
  { name: "ADAT 3/4", lvl: UFL, val: "-oo", v: 0, eq: "off" },
  { name: "ADAT 5/6", lvl: UFL, val: "-oo", v: 0, eq: "off" },
  { name: "ADAT 7/8", lvl: UFL, val: "-oo", v: 0, eq: "off" },
];

const PLAYBACK: Chan[] = [
  { name: "AN 1", pan: "L91", angle: -122, lvl: ["UFL"], val: "-3.6", v: 83, wrench: true },
  { name: "AN 2", pan: "R94", angle: 122, lvl: ["UFL"], val: "-5.0", v: 78, wrench: true },
  { name: "PH 3/4", lvl: UFL, val: "2.5", v: 105 },
  { name: "AS 1/2", lvl: UFL, val: "0.0", v: 96 },
  { name: "ADAT 3/4", lvl: UFL, val: "0.0", v: 96 },
  { name: "ADAT 5/6", lvl: UFL, val: "0.0", v: 96 },
  { name: "ADAT 7/8", lvl: UFL, val: "0.0", v: 96 },
];

const OUTPUTS: Chan[] = [
  { name: "AN 1/2", mute: true, s: "CUE", lvl: UFL, val: "-55.0", v: 9, trim: 0, eq: "off" },
  { name: "AS 1/2", mute: true, s: "CUE", lvl: UFL, val: "-oo", v: 1, trim: 0, eq: "off" },
  { name: "ADAT 5/6", mute: true, s: "CUE", lvl: UFL, val: "-59.8", v: 5, trim: 0, eq: "off" },
  { name: "ADAT 7/8", mute: true, s: "CUE", lvl: UFL, val: "-63.0", v: 2, trim: 11, eq: "off" },
];

const CONTROL: Chan[] = [
  { name: "Speaker B", s: "Link", lvl: UFL, val: "0.0", v: 95, trim: 30, eq: "off" },
  { name: "Main", mute: true, s: "CUE", lvl: ["-96.3", "-102"], val: "0.4", v: 96, trim: 30, eq: "on" },
];

function Channel({ c, kind }: { c: Chan; kind: "in" | "out" | "ctl" }) {
  const dim = kind === "out";
  return (
    <div
      className={clsx(
        "mr-[2px] flex w-[58px] shrink-0 flex-col rounded-t-[4px] border-x",
        kind === "in" && "h-[260px]",
        kind !== "in" && "h-[249px]",
        dim ? "border-[#33383c] bg-gradient-to-b from-[#42484e] via-[#2b2f33] to-[#25282b]" : "border-[#59616a] bg-gradient-to-b from-[#6a7783] via-[#4b5258] via-25% to-[#4a5056]"
      )}
    >
      <div className="h-[16px] text-center text-[10px] leading-[16px] whitespace-nowrap text-white">{c.name}</div>
      <div className="pl-[3px]">
        <KnobValue angle={c.angle ?? 0} value={c.pan ?? "0"} />
      </div>
      <div className="mt-[4px] ml-[3px] flex h-[18px] w-[50px] shrink-0 overflow-hidden rounded-full border-2 border-[#8a979f] font-['Lato',sans-serif] text-[10px] leading-[14px] font-bold text-[#c3cbd0]">
        <button className={clsx("w-[23px] border-r border-[#222]", c.mute ? "bg-gradient-to-b from-[#2f7fd6] to-[#154aa5]" : "bg-gradient-to-b from-[#5d676e] to-[#363c41]")}>M</button>
        <button
          className={clsx(
            "flex-1",
            c.s && "pr-px text-[9px]",
            c.s === "CUE" ? "bg-gradient-to-b from-[#2c6e3a] to-[#17431f] text-[#bfe0c4]" : "bg-gradient-to-b from-[#5d676e] to-[#363c41]"
          )}
        >
          {c.s ?? "S"}
        </button>
      </div>
      <div className={clsx("mt-[4px] ml-[3px] flex h-[13px] w-[50px] items-center justify-around rounded-full border text-[9px] text-[#94a8ba]", dim ? "border-[#222529]" : "border-[#394148]")}>
        {c.lvl.map((l, i) => (
          <span key={i}>{l}</span>
        ))}
      </div>
      <div className="mt-[4px] flex h-[137px] pl-[4px]">
        <Meter />
        <div
          className={clsx(
            "ml-[3px] flex w-[14px] justify-center rounded-full",
            dim
              ? "bg-[linear-gradient(90deg,#24272a_5px,#0a0c0e_5px_8px,#24272a_8px)]"
              : "bg-[linear-gradient(90deg,#40464c_5px,#24333f_5px_8px,#40464c_8px)]"
          )}
        >
          <input
            type="range"
            aria-label={`${c.name} level`}
            min={0}
            max={116}
            defaultValue={c.v}
            className={clsx("h-full w-[12px]", V_RANGE, dim ? CAP_MIX_DIM : CAP_MIX)}
          />
        </div>
        <div className="ml-[3px] flex flex-1 flex-col items-end">
          <div
            className={clsx(
              "mr-[5px] flex h-[52px] w-[10px] justify-center",
              c.trim === undefined && "bg-[linear-gradient(90deg,transparent_2px,#394046_2px_8px,transparent_8px)]",
              c.trim === 0 && "bg-[linear-gradient(90deg,transparent_2px,#050607_2px_3px,#33383c_3px_7px,#050607_7px_8px,transparent_8px)]",
              c.trim === 11 &&
                "bg-[linear-gradient(90deg,transparent_2px,#050607_2px_3px,#33383c_3px_7px,#050607_7px_8px,transparent_8px),linear-gradient(90deg,transparent_2px,#2f8a08_2px_8px,transparent_8px)] bg-[length:100%_40px,100%_100%] bg-no-repeat",
              c.trim === 30 &&
                "bg-[linear-gradient(90deg,transparent_2px,#394046_2px_8px,transparent_8px),linear-gradient(90deg,transparent_2px,#7ee029_2px_8px,transparent_8px)] bg-[length:100%_20px,100%_100%] bg-no-repeat"
            )}
          >
            <input
              type="range"
              aria-label={`${c.name} trim`}
              min={0}
              max={36}
              defaultValue={c.trim ?? 0}
              className={clsx("h-full w-[10px]", V_RANGE, c.trim === undefined ? TRIM_YELLOW : TRIM_GREEN)}
            />
          </div>
          {c.trim === undefined ? (
            <button className="mt-[3px] mr-[2px] size-[16px] rounded-full border-2 border-[#2e3439] bg-[#50585f] text-[9px] leading-[12px] font-bold text-[#aab2b8]">T</button>
          ) : (
            <div className="mt-[3px] h-[16px]" />
          )}
          <button
            aria-label={`${c.name} settings`}
            className={clsx(
              "mt-[5px] flex h-[20px] w-[18px] items-center justify-center rounded-tl-[3px] border border-r-0",
              c.wrench ? "rounded-bl-[3px] border-[#3b3520] bg-[#75663c] text-[#f0ae10]" : dim ? "border-[#3c4044] text-[#777b7e]" : "border-[#2f353a] text-[#1c2023]"
            )}
          >
            <Wrench className="size-[12px] fill-current" strokeWidth={1.5} />
          </button>
          {c.eq && (
            <button
              className={clsx(
                "h-[20px] w-[18px] rounded-bl-[3px] border border-t-0 border-r-0 font-['Lato',sans-serif] text-[9px]",
                c.eq === "on" ? "border-[#3b3520] bg-[#75663c] text-[#f0ae10]" : dim ? "border-[#3c4044] text-[#777b7e]" : "border-[#2f353a] text-[#1c2023]"
              )}
            >
              EQ
            </button>
          )}
        </div>
      </div>
      <div className="mt-[4px] flex items-center justify-between pl-[3px]">
        <span className={clsx("w-[29px] rounded-full border text-center text-[10px] leading-[12px] text-[#ffc81e]", dim ? "border-[#1d2226] bg-[#22262a]" : "border-[#343c43] bg-[#3c4650]")}>
          {c.val}
        </span>
        <button aria-label={`${c.name} submix`} className="flex h-[14px] w-[20px] items-center justify-end rounded-l-full border border-r-0 border-[#2a2f33] bg-[#363c41] pr-[2px]">
          <svg width="6" height="8">
            <path d="M5 0v8L0 4z" fill="#a8b0b5" />
          </svg>
        </button>
      </div>
      {kind === "in" && (
        <div className="mt-auto h-[14px] border-t border-[#2a2f33] bg-gradient-to-b from-[#4d545b] to-[#33393f] text-center text-[10px] leading-[12px] text-[#c3cdd4]">
          PH 3/4
        </div>
      )}
    </div>
  );
}

function NavGlyph({ kind }: { kind: string }) {
  if (kind === "1" || kind === "2") return <>{kind}</>;
  return (
    <svg width="6" height="7" fill="currentColor" className={clsx("mx-auto", kind === "next" && "rotate-180")}>
      <path d="M0 0h1.500v7H0zM6 0v7L1.500 3.500z" />
    </svg>
  );
}

function RowFooter({ label, tone, nav, width }: { label: string; tone: string; nav?: boolean; width: string }) {
  return (
    <div className={clsx("flex h-[15px] items-center bg-gradient-to-b from-[#4a5056] to-[#33383c]", width)}>
      <span className={clsx("h-[2px] w-[6px] shrink-0", tone)} />
      <span className={clsx("min-w-[87px] pr-[3px] pl-[6px] text-[8px] text-[#92a5ad]", NARROW)}>{label}</span>
      <span className="h-[10px] flex-1 rounded-full border-2 border-[#24282b] bg-[#7c8084]" />
      <span className={clsx("h-[2px] w-[4px]", tone)} />
      {nav && (
        <span className={clsx("flex text-[8px] leading-[13px] font-bold", tone === "bg-[#c8281e]" ? "text-[#d0181e]" : "text-[#2b9fb2]")}>
          {["prev", "1", "2", "next"].map((t) => (
            <button key={t} aria-label={`${label} ${t}`} className="h-[13px] w-[14px] border-l border-[#181b1d] bg-[#373c40]">
              <NavGlyph kind={t} />
            </button>
          ))}
        </span>
      )}
    </div>
  );
}

const Caret = () => (
  <svg width="6" height="4" className="shrink-0">
    <path d="M0 0h6L3 4z" fill="#b5c3cc" />
  </svg>
);

function FxHeader({ name }: { name: string }) {
  return (
    <div className="flex h-[30px] shrink-0 items-center bg-gradient-to-b from-[#3e5371] to-[#3c526e] pr-[5px] pl-[6px]">
      <button aria-label={`${name} enable`} className="size-[13px] rounded-full border-2 border-[#252f3b] bg-[#5b6672]" />
      <span className="ml-[6px] flex-1 text-[10px] font-bold text-[#8fcdf2]">{name}</span>
      <button className="flex h-[16px] w-[49px] items-center justify-center gap-1 rounded-full border border-[#28323d] bg-[#49535f] text-[10px] text-[#a3b0ba]">
        Preset
        <Caret />
      </button>
    </div>
  );
}

function FxType({ value }: { value: string }) {
  return (
    <div className="mx-[6px] mt-[7px] flex h-[20px] shrink-0 items-center rounded-[3px] border border-[#2c3238] bg-[#40474f] pr-[5px]">
      <span className="mr-1 flex h-full w-[28px] items-center justify-center border-r border-[#2c3238] bg-[#50585f] text-[10px] text-[#a7b1b8]">Type</span>
      <button className="flex flex-1 items-center justify-between pl-[3px] font-['Liberation_Sans',sans-serif] text-[10px] whitespace-nowrap text-[#ffc81e]">
        {value}
        <Caret />
      </button>
    </div>
  );
}

function FxKnob({ angle, value, label }: { angle: number; value: ReactNode; label?: string }) {
  return (
    <div className="w-[52px]">
      <KnobValue angle={angle} value={value} />
      {label && <div className="-ml-2 text-right text-[10px] leading-[15px] whitespace-nowrap text-[#a0aebb]">{label}</div>}
    </div>
  );
}

function FxColumn() {
  return (
    <div className="flex w-[125px] shrink-0 flex-col border-l-[3px] border-[#4a7aa6] bg-[#4a5159] font-['Lato',sans-serif] text-[11px] leading-[13px]">
      <div className="h-[275px] shrink-0">
        <FxHeader name="Reverb" />
        <FxType value="Large Room" />
        <div className="mt-[6px] flex flex-col pl-[6px]">
          <div className="flex h-[44px] gap-[6px]">
            <FxKnob angle={-52} value="310" label="Pre Delay" />
            <FxKnob angle={-45} value="59" label="Low Cut" />
          </div>
          <div className="h-[44px]">
            <FxKnob angle={95} value="14.2k" label="High Cut" />
          </div>
          <div className="h-[44px]">
            <FxKnob angle={135} value="3.00" label="Room Scale" />
          </div>
          <div className="flex h-[44px] gap-[6px]">
            <FxKnob angle={-16} value="43" label="Smooth" />
            <FxKnob angle={38} value="0.63" label="Width" />
          </div>
          <div className="flex items-center gap-2">
            <FxKnob angle={-18} value="-34.0" />
            <span className="text-[10px] text-[#a0aebb]">Volume</span>
          </div>
        </div>
      </div>
      <FxHeader name="Echo" />
      <FxType value="Stereo Cross" />
      <div className="flex flex-1 pl-[6px]">
        <div className="mt-[6px] w-[62px] shrink-0">
          <div className="h-[44px]">
            <FxKnob
              angle={-125}
              value={
                <>
                  <span className="block border-b border-dotted border-[#888] leading-[11px]">0.10</span>
                  <span className="block leading-[12px]">600</span>
                </>
              }
              label="Delay Time"
            />
          </div>
          <div className="h-[44px]">
            <FxKnob angle={-87} value="20" label="Feedback" />
          </div>
          <div className="h-[41px]">
            <FxKnob angle={0} value="0.50" label="Width" />
          </div>
          <div className="h-[44px]">
            <FxKnob angle={20} value="-25.5" label="Vol." />
          </div>
          <div className="flex items-center gap-1 text-[10px] text-[#a0aebb]">
            HC
            <button className="flex h-[14px] w-[34px] items-center justify-around rounded border border-[#2c3238] bg-[#40474f] font-['Liberation_Sans',sans-serif] text-[10px] text-[#ffc81e]">
              Off
              <Caret />
            </button>
          </div>
        </div>
        <div className="mt-[12px] flex flex-1 justify-around rounded-tl bg-[#2b3138] pt-[8px] text-center text-[10px] leading-[10px] text-[#a0aebb]">
          <div>
            <Meter />
            <div className="mt-[7px]">FX</div>
            In
          </div>
          <div>
            <Meter />
            <div className="mt-[7px]">FX</div>
            Out
          </div>
        </div>
      </div>
      <div className="h-[14px] shrink-0 bg-[#4a7aa6] text-center text-[10px] leading-[14px] font-bold text-[#c6d9ea]">FX</div>
    </div>
  );
}

function SideHeader({ name }: { name: string }) {
  return (
    <button className="flex h-[19px] shrink-0 items-center border-y border-[#0c0f11] bg-gradient-to-b from-[#2a4a63] to-[#1f3a50] pr-[5px] pl-[5px] text-[#8ea3b3]">
      <span className="flex-1 text-center text-[10px] whitespace-nowrap">{name}</span>
      <span className="flex size-[12px] shrink-0 items-center justify-center rounded-full bg-[#16242f]">
        <Caret />
      </span>
    </button>
  );
}

function SlotList({ label, count }: { label: string; count: number }) {
  return (
    <ul className="mx-[6px] rounded border border-[#0b0e10] bg-[#161c21] p-px text-[#a9b9c3]">
      {Array.from({ length: count }, (_, i) => (
        <li key={i} className="flex h-[12px] items-center border-b border-[#0d1013] font-['Liberation_Sans',sans-serif] text-[10px] leading-[11px]">
          <button aria-label={`${label} ${i + 1}`} className="mr-[4px] h-[10px] w-[18px] rounded-[3px] bg-[#2c3033]" />
          {label} {i + 1}
        </li>
      ))}
    </ul>
  );
}

const SIDE_PILL = "rounded-full border border-[#121416] bg-[#30353a] text-[10px] leading-[13px] text-[#8c979f]";

function LcdButton({ on, children, className }: { on?: boolean; children: ReactNode; className: string }) {
  return (
    <button className={clsx("h-[16px] rounded-[2px] border border-[#d6f5ff] leading-[14px]", on ? "bg-[#b5ebfa] text-[#10627a]" : "text-[#d6f5ff]", className)}>
      {children}
    </button>
  );
}

function SideColumn() {
  return (
    <aside className="flex w-[94px] shrink-0 flex-col bg-[#1d2226] font-['Lato',sans-serif] text-[11px] leading-[13px]">
      <div className="flex flex-col border-x border-b border-[#0a0c0d] bg-[#25292c]">
        <div className="flex h-[27px] items-center justify-center border-b border-black bg-gradient-to-b from-[#3a3e41] to-[#191b1d]">
          <button className="flex h-[15px] w-[79px] items-center justify-center gap-px rounded-full border border-[#111] bg-[#2a2e31] font-['Liberation_Sans',sans-serif] text-[10px] whitespace-nowrap text-[#c3cdd4]">
            Babyface Pro
            <Caret />
          </button>
        </div>
        <div className="flex h-[76px] flex-col px-[4px] pt-[3px]">
          <div className="flex">
            <svg width="46" height="46" viewBox="0 0 46 46">
              <circle cx="22" cy="23" r="21" fill="#15181a" />
              <circle cx="22" cy="23" r="14" fill="#363a3d" />
              <path d="M10 31l5 3-2 6-7-4z" fill="#6fd322" />
              <text x="22" y="27" textAnchor="middle" fontSize="11" fill="#8b959c">
                FX
              </text>
              <text x="23" y="44" textAnchor="middle" fontSize="8" fill="#9aa3a9">
                %
              </text>
            </svg>
            <div className="ml-[4px] flex flex-col gap-[4px] pt-[2px]">
              <button aria-label="Undo" className="flex h-[19px] w-[29px] items-center justify-center rounded border border-black bg-[#2c3033]">
                <svg width="17" height="9" fill="#a8b0b5">
                  <path d="M0 4 5 0v2q7-1 11 5-5-3-11-2v3z" />
                </svg>
              </button>
              <button aria-label="Redo" className="flex h-[19px] w-[29px] items-center justify-center rounded border border-black bg-[#26292c]">
                <svg width="17" height="9" fill="#565d62">
                  <path d="M17 4 12 0v2Q5 1 1 7q5-3 11-2v3z" />
                </svg>
              </button>
            </div>
          </div>
          <div className="mx-[3px] mt-[5px] flex h-[17px] overflow-hidden rounded-full border border-[#77838b] text-[10px] text-[#9aa5ad]">
            <button className="flex-1 bg-gradient-to-b from-[#2f7fd6] to-[#154aa5] font-bold text-white">M</button>
            <button className="flex-1 border-x border-[#181b1d] bg-[#373c40]">S</button>
            <button className="flex-1 bg-[#373c40]">F</button>
          </div>
        </div>
        <SideHeader name="View Options" />
        <div
          className={clsx(
            "m-[6px] flex h-[125px] flex-col justify-between rounded-[5px] border-2 border-[#0b1a20] bg-gradient-to-br from-[#2ac0dc] to-[#12a5c4] px-[4px] pt-px pb-[4px] text-center text-[8px] leading-[14px] text-[#06222b]",
            NARROW
          )}
        >
          <span>ROUTING MODE</span>
          <div className="flex">
            <LcdButton on className="w-[39px]">SUBMIX</LcdButton>
            <LcdButton className="flex-1">FREE</LcdButton>
          </div>
          <span>LEVEL METERS</span>
          <div className="flex gap-[3px]">
            <LcdButton on className="w-[40px]">POST FX</LcdButton>
            <LcdButton className="flex-1">RMS</LcdButton>
          </div>
          <span>SHOW</span>
          <div className="flex gap-[3px]">
            <LcdButton on className="w-[29px]">FX</LcdButton>
            <LcdButton className="flex-1">TRIM</LcdButton>
          </div>
          <div className="flex gap-[3px]">
            <LcdButton className="w-[29px]">2ROW</LcdButton>
            <LcdButton className="flex-1">NAMES</LcdButton>
          </div>
        </div>
        <SideHeader name="Snapshots" />
        <div className="h-[129px] pt-[3px]">
          <SlotList label="Mix" count={8} />
          <button className={clsx("mx-auto mt-[4px] block h-[15px] w-[53px]", SIDE_PILL)}>Store</button>
        </div>
        <SideHeader name="Groups" />
        <div className="h-[118px] px-[5px] pt-[4px]">
          <table className="w-full table-fixed border border-[#0b0e10] bg-[#161c21] text-center text-[#c3cdd4]">
            <thead>
              <tr className="h-[18px] bg-[#10242c] text-[9px] text-[#8fb0bd]">
                <th className="font-normal">Mute</th>
                <th className="font-normal">Solo</th>
                <th className="font-normal">Fader</th>
              </tr>
            </thead>
            <tbody>
              {[1, 2, 3, 4].map((n) => (
                <tr key={n} className="h-[16px] text-[10px] leading-[14px]">
                  {[0, 1, 2].map((k) => (
                    <td key={k} className="border border-[#0d1013]">
                      {n}
                    </td>
                  ))}
                </tr>
              ))}
            </tbody>
          </table>
          <div className="mt-[5px] flex">
            <button className={clsx("h-[15px] flex-1", SIDE_PILL)}>Edit</button>
            <button className={clsx("h-[15px] flex-1", SIDE_PILL)}>Clear</button>
          </div>
        </div>
        <SideHeader name="Layout Presets" />
        <div className="h-[130px] pt-[5px]">
          <div className="flex px-[5px] pb-[4px]">
            <button className={clsx("h-[15px] flex-1", SIDE_PILL)}>All</button>
            <button className={clsx("h-[15px] flex-1", SIDE_PILL)}>Sub</button>
          </div>
          <SlotList label="Layout" count={6} />
          <button className={clsx("mx-auto mt-[6px] block h-[15px] w-[53px]", SIDE_PILL)}>Store</button>
        </div>
      </div>
    </aside>
  );
}

function CtlButton({ children, className }: { children: ReactNode; className?: string }) {
  return (
    <button
      className={clsx(
        "mx-[4px] flex h-[17px] shrink-0 items-center justify-center gap-1 rounded-full border border-[#12171a] bg-gradient-to-b from-[#4a555d] to-[#333c43] text-[9px] whitespace-nowrap text-[#c0c9cf]",
        className
      )}
    >
      {children}
    </button>
  );
}

function TotalMix() {
  return (
    <section
      aria-label="RME TotalMix FX"
      className="absolute top-[239px] left-[1034px] z-20 w-[647px] border border-[#888] bg-white shadow-[0_4px_14px_rgba(0,0,0,.5)]"
    >
      <header className="flex h-[29px] items-center pl-[7px] font-['Lato','Open_Sans',sans-serif] text-[12px] text-[#999]">
        <svg width="16" height="16" viewBox="0 0 16 16">
          <rect width="16" height="16" rx="3" fill="#3a444c" />
          <circle cx="6" cy="5" r="3.500" fill="#8a9299" />
          <path d="M9 4h5v3H9z" fill="#1c2226" />
          <path d="M3 12h10" stroke="#ccc" strokeWidth="2" strokeDasharray="2 1" />
        </svg>
        <h2 className="ml-[6px] flex-1 whitespace-nowrap">RME TotalMix FX: Babyface Pro (1) - 44.1k - C:\Users\Ярослав\Documents\1.tmws</h2>
        <svg width="11" height="11" className="mr-[34px]">
          <path d="M0 5.500h11" stroke="#777" />
        </svg>
        <svg width="11" height="11" className="mr-[34px]">
          <path d="M1.500 1.500h8v8h-8z" stroke="#ddd" fill="none" />
        </svg>
        <button aria-label="Close TotalMix" className="mr-[14px]">
          <X className="size-4 text-[#666]" strokeWidth={1.2} />
        </button>
      </header>
      <nav className="flex h-[22px] items-center gap-[14px] pl-[6px] font-['Lato','Open_Sans',sans-serif] text-[12px] text-[#555]">
        {["File", "Function", "Options", "Window", "Help"].map((m) => (
          <a key={m} href="#">
            {m}
          </a>
        ))}
      </nav>
      <div className="mx-px mb-[2px] flex border-t border-[#777] bg-[#1d2226]">
        <div className="flex min-w-0 flex-1 flex-col">
          <div className="flex">
            <div className="min-w-0 flex-1">
              <div className="h-[275px] border-l-[3px] border-[#c8281e] pt-px">
                <div className="flex pl-[2px]">
                  {INPUTS.map((c, i) => (
                    <Channel key={i} c={c} kind="in" />
                  ))}
                </div>
                <RowFooter label="HARDWARE INPUTS" tone="bg-[#c8281e]" nav width="w-[419px]" />
              </div>
              <div className="h-[275px] border-l-[3px] border-[#2b9fb2]">
                <div className="flex pl-[2px]">
                  {PLAYBACK.map((c, i) => (
                    <Channel key={i} c={c} kind="in" />
                  ))}
                </div>
                <RowFooter label="SOFTWARE PLAYBACK" tone="bg-[#2b9fb2]" nav width="w-[419px]" />
              </div>
            </div>
            <FxColumn />
          </div>
          <div className="flex border-l-[3px] border-[#1f7a1f]">
            <div className="flex-1 pt-px">
              <div className="flex pl-[2px]">
                {OUTPUTS.map((c) => (
                  <Channel key={c.name} c={c} kind="out" />
                ))}
              </div>
              <RowFooter label="HARDWARE OUTPUTS" tone="bg-[#1f7a1f]" width="w-[240px]" />
            </div>
            <div className="w-[185px] border-l-[3px] border-[#566876] pt-px">
              <div className="flex">
                {CONTROL.map((c) => (
                  <Channel key={c.name} c={c} kind="ctl" />
                ))}
                <div className="flex h-[249px] w-[58px] flex-col rounded-t bg-gradient-to-b from-[#3a4046] to-[#25292c] pt-[24px]">
                  <CtlButton>Dim</CtlButton>
                  <CtlButton className="mt-[4px]">Recall</CtlButton>
                  <CtlButton className="mt-[4px]">Speaker B</CtlButton>
                  <CtlButton className="mt-[4px]">Mono</CtlButton>
                  <div className="mx-[5px] mt-[5px] h-px bg-[#55616a]" />
                  <CtlButton className="mt-[5px]">Talkback</CtlButton>
                  <CtlButton className="mt-[4px] opacity-60">Ext. Input</CtlButton>
                  <CtlButton className="mt-[5px]">Mute FX</CtlButton>
                  <CtlButton className="mt-[34px]">
                    Assign
                    <Caret />
                  </CtlButton>
                </div>
              </div>
              <div className="flex h-[14px] items-center bg-[#3a4046]">
                <span className={clsx("flex h-full w-[90px] items-center gap-1 bg-[#566876] pl-[3px] text-[8px] text-[#a5b5bd]", NARROW)}>
                  <svg width="10" height="10">
                    <circle cx="5" cy="5" r="5" fill="#1d2933" />
                    <path d="M4 2l4 3-4 3z" fill="#b5c3cc" />
                  </svg>
                  CONTROL ROOM
                </span>
                <span className="mx-[4px] h-[10px] flex-1 rounded-full border-2 border-[#24282b] bg-[#7c8084]" />
              </div>
            </div>
          </div>
        </div>
        <SideColumn />
      </div>
    </section>
  );
}

/* ---------- page ---------- */

export default function App() {
  return (
    <div className="relative flex h-screen w-full flex-col overflow-hidden bg-[#333] font-['Liberation_Sans',Arial,sans-serif]">
      <header className="h-[34px] shrink-0 border-b border-[#e6e6e6] bg-white font-['Lato','Open_Sans',sans-serif] text-[12px] text-[#555]">
        <div className="flex h-[14px] items-end text-[#8d8d8d]">
          <span className="-ml-[6px] mb-[5px] flex">
            <ReaperLogo size={16} />
          </span>
          <h1 className="ml-[6px] flex-1 leading-[22px] whitespace-nowrap">
            Base_25_07_18 [modified] - REAPER v4.32/x64 - Registered to Black Riders (Commercial license)
          </h1>
          <svg width="110" height="9" fill="none" stroke="#777" className="mr-[16px] mb-[5px]">
            <path d="M0 4.500h10M47 0v7h8V0M93 8l9-9M102 8l-9-9" />
          </svg>
        </div>
        <nav className="flex h-[19px] items-center gap-[13px]">
          {["File", "Edit", "View", "Insert", "Item", "Track", "Options", "Actions", "Help"].map((m) => (
            <a key={m} href="#">
              {m}
            </a>
          ))}
          <span className="ml-[28px]">[Change track master/parent send channel offset]</span>
          <span className="mr-[7px] ml-auto">[audio device closed]</span>
        </nav>
      </header>

      <main className="flex min-h-0 flex-1 flex-col">
        <div className="flex h-[418px] shrink-0">
          <div className="w-[512px] shrink-0">
            <Toolbar />
            {TRACKS.map((t) => (
              <TrackRow key={t.n} t={t} />
            ))}
          </div>
          <div className="w-[8px] shrink-0 border-r-2 border-[#1f1f1f] bg-[#2a2a2a]" />
          <Arrange />
        </div>

        <div className="flex h-[18px] shrink-0">
          <div className="w-[512px] border-t border-[#5a5a5a] text-[10px] leading-[17px] text-[#aaa]">FX AMP [input] Analog 1 (1)</div>
          <div className="w-[8px] bg-[#2a2a2a]" />
          <HScroll />
        </div>

        <Transport />

        <div className="mt-[6px] flex h-[655px] shrink-0">
          <Master />
          {STRIPS.map((s) => (
            <Strip key={s.n} s={s} />
          ))}
        </div>
        <div className="flex flex-1 items-start overflow-hidden border-t-2 border-[#1c1c1c] bg-[#484848] text-[11px] leading-[15px]">
          <button className="flex items-center gap-[5px] bg-[#b3bfbe] pr-3 pl-[12px] font-bold text-[#222] [clip-path:polygon(0_0,100%_0,90%_100%,0_100%)]">
            Mixer
            <span className="flex size-[10px] items-center justify-center border border-[#333]">
              <X className="size-[8px]" strokeWidth={3} />
            </span>
          </button>
          <button className="flex items-center gap-[5px] bg-[#7f8d8b] pr-4 pl-1 text-[#3a4443] [clip-path:polygon(0_0,100%_0,94%_100%,0_100%)]">
            Routing/Grouping Matrix
            <span className="flex size-[10px] items-center justify-center border border-[#333]">
              <X className="size-[8px]" strokeWidth={3} />
            </span>
          </button>
        </div>
      </main>

      <Preferences />
      <TotalMix />
    </div>
  );
}
